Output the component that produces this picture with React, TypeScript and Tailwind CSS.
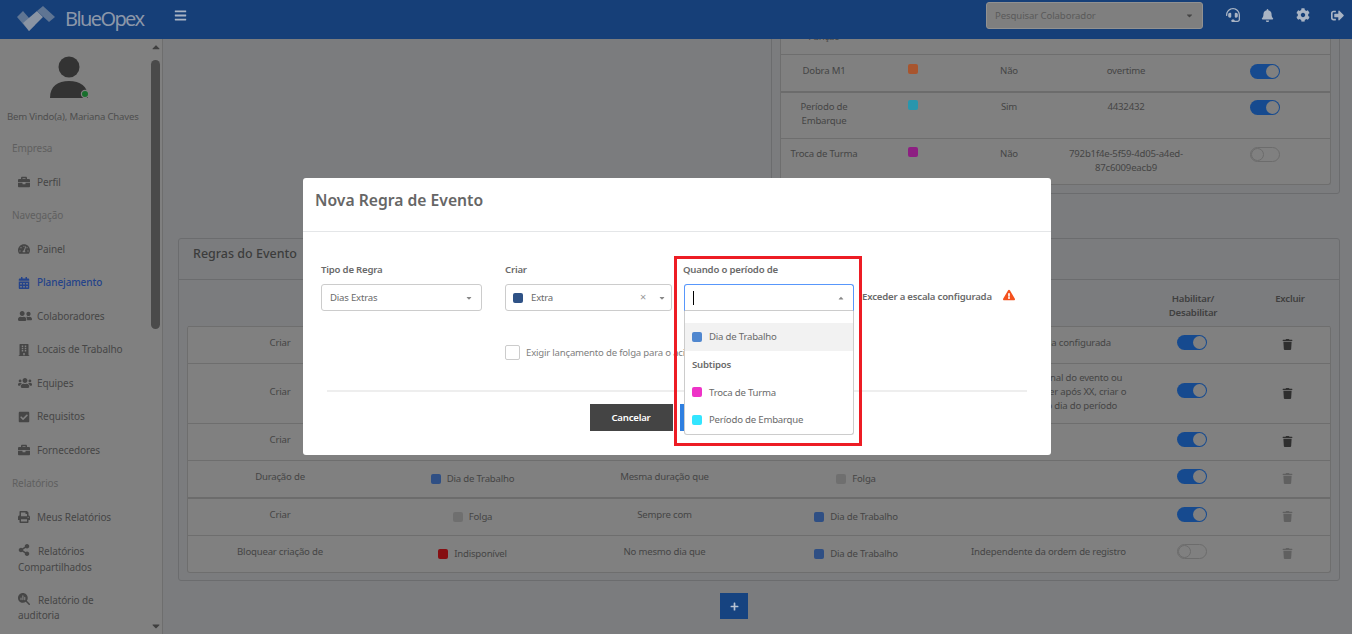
import React from "react";
import {
  FaBars, FaBell, FaBriefcase, FaBuilding, FaCalendarAlt, FaCaretDown, FaCaretUp, FaCheckSquare, FaCog,
  FaExclamationTriangle, FaHeadset, FaPlus, FaPrint, FaShareAlt, FaSignOutAlt, FaTachometerAlt, FaTrash,
  FaUserFriends, FaUsers,
} from "react-icons/fa";
import { FaMagnifyingGlassChart } from "react-icons/fa6";

const ruleGrid = "grid grid-cols-[186px_197px_187px_196px_189px_102px_1fr]";
const eventGrid = "grid grid-cols-[86px_92px_100px_134px_1fr]";

function Toggle({ on = true }: { on?: boolean }) {
  return on ? (
    <div className="w-[30px] h-[15px] rounded-full bg-[#164a8f] flex justify-end items-center p-[1px]">
      <div className="w-[13px] h-[13px] rounded-full bg-[#808080]" />
    </div>
  ) : (
    <div className="w-[30px] h-[15px] rounded-full bg-[#808080] border border-[#6c6c6c] flex items-center">
      <div className="w-[13px] h-[13px] rounded-full bg-[#808080] border border-[#6c6c6c]" />
    </div>
  );
}

function Sq({ c }: { c: string }) {
  return <span className="inline-block w-[10px] h-[10px] rounded-[2px] shrink-0" style={{ backgroundColor: c }} />;
}

function Heading({ children }: { children: React.ReactNode }) {
  return <div className="h-[33.5px] flex items-center pl-[12px] text-[#5f5f5f] tracking-[-0.1px]">{children}</div>;
}

function Item({ icon, children, active }: { icon: React.ReactNode; children: React.ReactNode; active?: boolean }) {
  return (
    <div className={`h-[33.5px] flex items-center pl-[18px] tracking-[-0.1px] ${active ? "text-[#24438a] font-medium" : "text-[#464646]"}`}>
      <span className="w-[19px] text-[12px] flex">{icon}</span>
      <span>{children}</span>
    </div>
  );
}

function Sidebar() {
  return (
    <aside className="relative w-[163px] h-full shrink-0 overflow-hidden bg-[#808080] border-r border-[#6e6e6e] text-[10px]">
      <div className="h-[67px] flex justify-center pt-[17px] pr-[25px]">
        <svg width="38" height="43" viewBox="0 0 38 43">
          <circle cx="19" cy="11" r="10.5" fill="#333" />
          <path d="M0 42 C0 30 8 25 19 25 C30 25 38 30 38 42 Z" fill="#333" />
          <circle cx="35" cy="38" r="3.6" fill="#176f2c" stroke="#808080" strokeWidth="1.2" />
        </svg>
      </div>
      <div className="pl-[7px] h-[26px] pb-[4px] flex items-center text-[9.6px] tracking-[-0.2px] text-[#4e4e4e] whitespace-nowrap">Bem Vindo(a), Mariana Chaves</div>
      <Heading>Empresa</Heading>
      <Item icon={<FaBriefcase />}>Perfil</Item>
      <Heading>Navegação</Heading>
      <Item icon={<FaTachometerAlt />}>Painel</Item>
      <Item icon={<FaCalendarAlt />} active>Planejamento</Item>
      <Item icon={<FaUserFriends className="text-[14px]" />}>Colaboradores</Item>
      <Item icon={<FaBuilding />}>Locais de Trabalho</Item>
      <Item icon={<FaUsers className="text-[14px]" />}>Equipes</Item>
      <Item icon={<FaCheckSquare />}>Requisitos</Item>
      <Item icon={<FaBriefcase />}>Fornecedores</Item>
      <Heading>Relatórios</Heading>
      <Item icon={<FaPrint />}>Meus Relatórios</Item>
      <div className="h-[50px] pl-[18px] pt-[9px] leading-[16px] text-[#464646] tracking-[-0.1px]">
        <FaShareAlt className="inline text-[12px] mr-[8px] align-[-1px]" />Relatórios<br />Compartilhados
      </div>
      <div className="pl-[18px] pt-[9px] leading-[15px] text-[#464646] tracking-[-0.1px]">
        <FaMagnifyingGlassChart className="inline text-[12px] mr-[8px] align-[-1px]" />Relatório de<br />auditoria
      </div>
      <FaCaretUp className="absolute left-[150px] top-[2px] text-[12px] text-[#3f3f3f]" />
      <div className="absolute left-[151px] top-[21px] w-[9px] h-[269px] rounded-full bg-[#4a4a4a]" />
      <FaCaretDown className="absolute left-[150px] top-[581px] text-[12px] text-[#3f3f3f]" />
    </aside>
  );
}

function Header() {
  return (
    <header className="h-[39px] shrink-0 bg-[#163f78] flex items-center text-[#a9b4c4]">
      <svg width="40" height="27" viewBox="0 0 40 27" className="ml-[17px] shrink-0">
        <path d="M0 11 L6 5 L18 19 L12 25 Z" fill="#5f7593" />
        <path d="M6 17 L12 25 L26 11 L20 5 Z" fill="#8a94a3" />
        <path d="M20 5 L26 0 L38 11 L32 16 Z" fill="#5f7593" />
      </svg>
      <div className="ml-[8px] w-[97px] text-[20px] leading-none tracking-[-1.6px] text-[#8c97a9] pb-[1px]">BlueOpex</div>
      <FaBars className="ml-[12px] text-[13px] mb-[9px]" />
      <div className="ml-[799px] w-[217px] h-[27px] mb-[9px] mt-[1px] rounded-[3px] bg-[#7f7f7f] border border-[#919191] flex items-center justify-between pl-[8px] pr-[8px] text-[9.6px] tracking-[-0.1px] text-[#5a5a5a]">
        <span className="pt-[2px]">Pesquisar Colaborador</span>
        <FaCaretDown className="text-[9px] text-[#454545]" />
      </div>
      <FaHeadset className="ml-[23px] mb-[9px] text-[14px]" />
      <FaBell className="ml-[21px] mb-[9px] text-[13px]" />
      <FaCog className="ml-[22px] mb-[9px] text-[14px]" />
      <FaSignOutAlt className="ml-[21px] mb-[9px] text-[13px]" />
    </header>
  );
}

function EventRow({ name, color, flag, value, on, thick, h, pt }: { name: React.ReactNode; color?: string; flag?: string; value?: React.ReactNode; on?: boolean; thick?: boolean; h: string; pt: string }) {
  return (
    <div className={`${eventGrid} ${h} ${pt} ${thick ? "border-t-2 border-[#6c6c6c]" : "border-t border-[#6e6e6e]"} text-center leading-[14px]`}>
      <div>{name}</div>
      <div className="flex justify-center">{color && <Sq c={color} />}</div>
      <div>{flag}</div>
      <div>{value}</div>
      <div className="flex justify-center pl-[7px]">{on !== undefined && <Toggle on={on} />}</div>
    </div>
  );
}

function RuleRow({ a, b, c, d, e, on, h, thick, dimTrash }: { a: string; b?: React.ReactNode; c?: string; d?: React.ReactNode; e?: React.ReactNode; on: boolean; h: string; thick?: boolean; dimTrash?: boolean }) {
  return (
    <div className={`${ruleGrid} ${h} ${thick ? "border-t-2 border-[#6c6c6c]" : "border-t border-[#6e6e6e]"} items-center text-center leading-[14px]`}>
      <div className="pb-[4px] pr-[2px]">{a}</div>
      <div className="pb-[1px] flex justify-center">{b}</div>
      <div className="pb-[4px]">{c}</div>
      <div className="pb-[1px] flex justify-center">{d}</div>
      <div className="pb-[4px]">{e}</div>
      <div className="pb-[6px] pr-[4px] flex justify-center"><Toggle on={on} /></div>
      <div className="flex justify-center pb-[1px] pr-[1px]">
        <FaTrash className={`text-[11px] ${dimTrash ? "text-[#606060]" : "text-[#2f2f2f]"}`} />
      </div>
    </div>
  );
}

function Tag({ c, children }: { c: string; children: React.ReactNode }) {
  return <span className="flex items-center gap-[6px]"><Sq c={c} />{children}</span>;
}

function Content() {
  return (
    <main className="flex-1 h-full overflow-hidden bg-[#7b7c7e] text-[#454545] text-[9.6px] tracking-[-0.2px] pl-[15px] pr-[12px]">
      <div className="flex justify-end -mt-[48px]">
        <div className="w-[569px] border border-[#6b6c6e] rounded-[3px] px-[8px] pt-[2px] pb-[8px]">
          <div className="bg-[#808080] border-x border-b border-[#6e6e6e] rounded-b-[3px]">
            <div className={`${eventGrid} h-[60px] pt-[19px] text-center leading-[16px]`}>
              <div>Folga por<br />Função</div>
            </div>
            <EventRow h="h-[37px]" pt="pt-[9px]" name="Dobra M1" color="#a8552e" flag="Não" value="overtime" on />
            <EventRow h="h-[47px]" pt="pt-[7px]" thick name={<>Período de<br />Embarque</>} color="#2996ad" flag="Sim" value="4432432" on />
            <EventRow h="h-[46px]" pt="pt-[8px]" name="Troca de Turma" color="#8d1f82" flag="Não" value={<>792b1f4e-5f59-4d05-a4ed-<br />87c6009eacb9</>} on={false} />
          </div>
        </div>
      </div>
      <section className="mt-[44px] h-[343px] border border-[#6b6c6e] rounded-[3px] px-[8px]">
        <h2 className="-mx-[8px] h-[41px] border-b border-[#6b6c6e] pl-[14px] flex items-center text-[12.5px] tracking-normal font-medium text-[#3c3c3c] pb-[10px]">Regras do Evento</h2>
        <div className={`${ruleGrid} h-[46px] pt-[12px] text-center leading-[14px] font-semibold text-[#3f3f3f]`}>
          <div /><div /><div /><div /><div />
          <div>Habilitar/<br />Desabilitar</div>
          <div className="pl-[5px]">Excluir</div>
        </div>
        <div className="bg-[#808080] border-x border-b border-[#6e6e6e] rounded-[3px]">
          <RuleRow h="h-[37px]" a="Criar" e="Exceder a escala configurada" on />
          <RuleRow h="h-[60px]" a="Criar" e={<>Se for no dia do final do evento ou<br />ou se ele for ocorrer após XX, criar o<br />logo no primeiro dia do período</>} on />
          <RuleRow h="h-[37px]" a="Criar" on />
          <RuleRow h="h-[37px]" dimTrash a="Duração de" b={<Tag c="#2f4f84">Dia de Trabalho</Tag>} c="Mesma duração que" d={<Tag c="#6f6f6f">Folga</Tag>} on />
          <RuleRow h="h-[38px]" thick dimTrash a="Criar" b={<Tag c="#6f6f6f">Folga</Tag>} c="Sempre com" d={<Tag c="#2f4f84">Dia de Trabalho</Tag>} on />
          <RuleRow h="h-[37px]" dimTrash a="Bloquear criação de" b={<Tag c="#860f12">Indisponível</Tag>} c="No mesmo dia que" d={<Tag c="#2f4f84">Dia de Trabalho</Tag>} e="Independente da ordem de registro" on={false} />
        </div>
      </section>
      <div className="mt-[12px] ml-[542px] w-[28px] h-[26px] bg-[#164380] flex items-center justify-center text-[#b9c3d2] text-[9px]"><FaPlus /></div>
    </main>
  );
}

function Option({ c, children, active }: { c: string; children: React.ReactNode; active?: boolean }) {
  return (
    <div className={`h-[27.5px] flex items-center pl-[7px] gap-[7px] ${active ? "bg-[#f2f2f2]" : ""}`}>
      <Sq c={c} /><span className="pt-[1px]">{children}</span>
    </div>
  );
}

function Modal() {
  return (
    <div className="absolute left-[303px] top-[178px] w-[748px] h-[277px] bg-white rounded-[3px] text-[#6a6a6a] text-[9.6px] tracking-[-0.2px]">
      <div className="h-[54px] border-b border-[#e4e6e8] pl-[12px] flex items-center text-[15.7px] tracking-normal font-semibold text-[#666] pb-[7px]">Nova Regra de Evento</div>
      <div className="pl-[18px] pt-[29px]">
        <div className="flex items-start">
          <div className="w-[161px]">
            <div className="h-[16px] leading-[17px] font-semibold">Tipo de Regra</div>
            <div className="mt-[7px] h-[27px] border border-[#ccc] rounded-[3px] flex items-center justify-between pl-[8px] pr-[8px] pt-[1px]">
              Dias Extras<FaCaretDown className="text-[8px] text-[#888]" />
            </div>
          </div>
          <div className="w-[167px] ml-[23px]">
            <div className="h-[16px] leading-[17px] font-semibold">Criar</div>
            <div className="mt-[7px] h-[27px] border border-[#ccc] rounded-[3px] flex items-center pl-[7px] pr-[5px] gap-[8px]">
              <Sq c="#2f5286" /><span className="flex-1 pt-[1px]">Extra</span>
              <span className="text-[#999] text-[11px]">×</span>
              <FaCaretDown className="text-[8px] text-[#888] ml-[4px]" />
            </div>
          </div>
          <div className="relative w-[170px] ml-[12px]">
            <div className="h-[16px] leading-[17px] font-semibold -ml-[1px]">Quando o período de</div>
            <div className="mt-[7px] h-[27px] border border-[#5897fb] border-b-[#ccc] rounded-t-[3px] flex items-center justify-between pl-[8px] pr-[8px]">
              <span className="w-[1px] h-[14px] bg-black" />
              <FaCaretUp className="text-[8px] text-[#888]" />
            </div>
            <div className="absolute z-10 left-0 top-[50px] w-[170px] h-[124px] bg-white border border-t-0 border-[#ccc] rounded-b-[3px] pt-[12px]">
              <Option c="#5087cf" active>Dia de Trabalho</Option>
              <div className="h-[28px] pl-[7px] pt-[2px] flex items-center font-semibold">Subtipos</div>
              <Option c="#ee33c7">Troca de Turma</Option>
              <Option c="#33e5ff">Período de Embarque</Option>
            </div>
          </div>
          <div className="flex items-center h-[27px] mt-[23px] ml-[8px] font-semibold whitespace-nowrap pb-[1px]">
            Exceder a escala configurada
            <FaExclamationTriangle className="ml-[11px] mb-[4px] text-[12px] text-[#f4511e]" />
          </div>
        </div>
        <div className="ml-[184px] mt-[34px] flex items-center gap-[6px] h-[15px] whitespace-nowrap text-[#808080]">
          <span className="w-[15px] h-[15px] border border-[#ccc] rounded-[2px]" />
          <span className="pt-[1px]">Exigir lançamento de folga para o acionamento</span>
        </div>
      </div>
      <div className="mx-[24px] mt-[30px] h-[2px] bg-[#eeeeee]" />
      <div className="mt-[12px] flex justify-center gap-[7px] pr-[2px]">
        <div className="w-[83px] h-[27px] bg-[#444] text-white font-semibold flex items-center justify-center pt-[1px]">Cancelar</div>
        <div className="w-[83px] h-[27px] bg-[#2f7fe0]" />
      </div>
      <div className="absolute z-20 left-[371px] top-[78px] w-[188px] h-[190px] border-[3px] border-[#ed1c24] pointer-events-none" />
    </div>
  );
}

export default function App() {
  return (
    <div className="relative w-[1352px] h-[634px] overflow-hidden flex flex-col font-['Noto_Sans',sans-serif]">
      <Header />
      <div className="flex flex-1 min-h-0">
        <Sidebar />
        <Content />
      </div>
      <Modal />
    </div>
  );
}
